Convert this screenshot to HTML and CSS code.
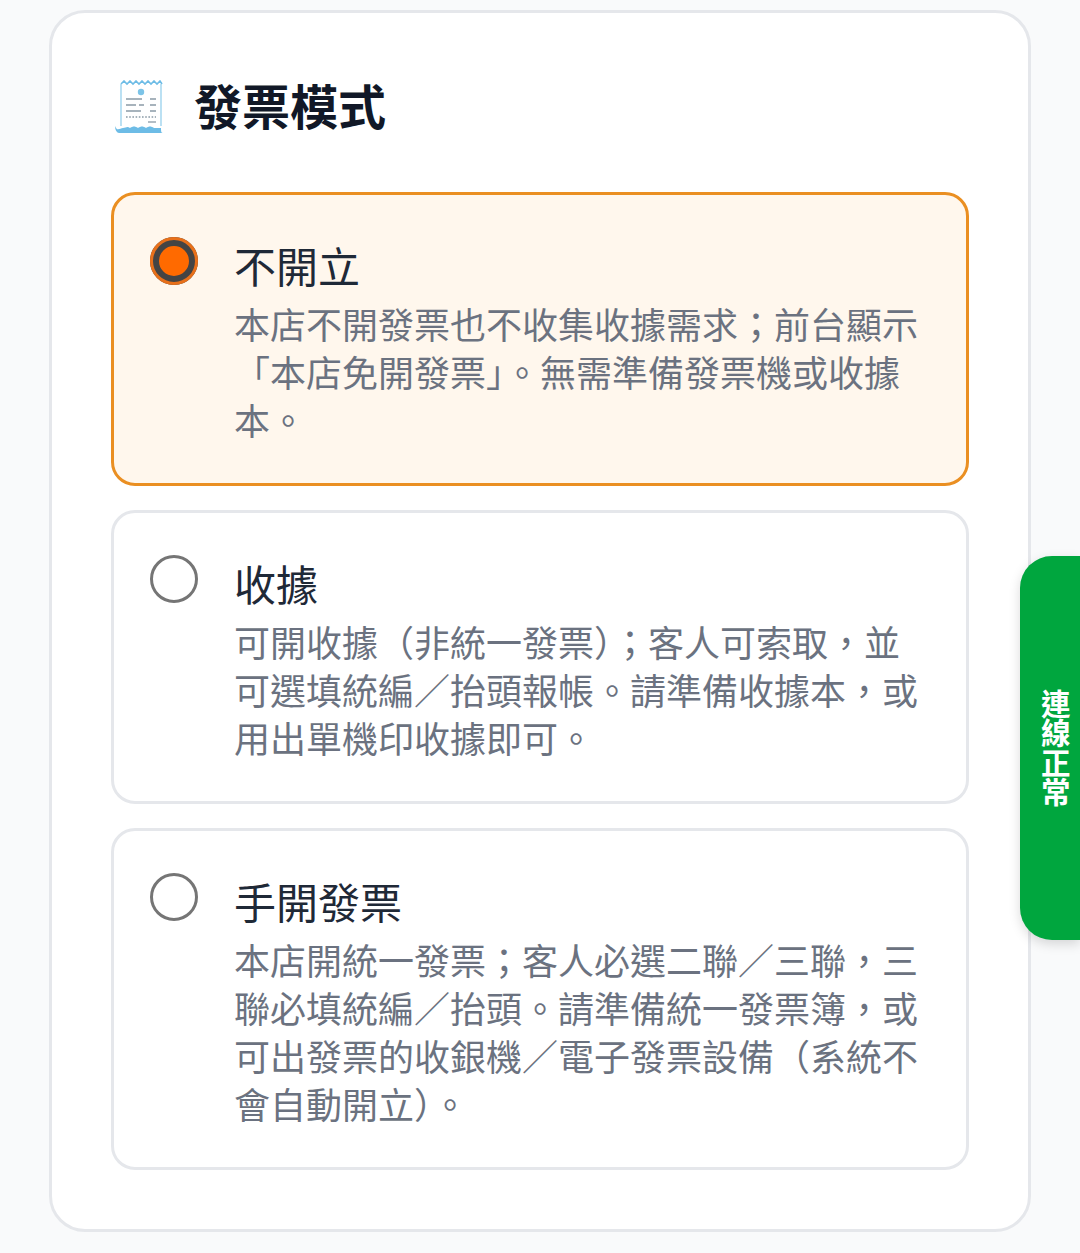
FILE: index.html
```html
<!doctype html>
<html lang="zh-Hant">
	<head>
		<meta charset="utf-8">
		<title>發票模式</title>
		<link rel="stylesheet" href="styles.css">
	</head>
	<body>
		<section class="card">
			<h2 class="card-title">
				<svg class="title-icon" viewBox="0 0 48 54" width="48" height="54" aria-hidden="true">
					<path d="M6 4 L9 1 L12 4 L15 1 L18 4 L21 1 L24 4 L27 1 L30 4 L33 1 L36 4 L39 1 L42 4 L45 1 L47 4" fill="none" stroke="#6dbce6" stroke-width="1.6"/>
					<path d="M6 4 V46 M46 4 V46" fill="none" stroke="#9fd4ee" stroke-width="1.4"/>
					<circle cx="26" cy="12" r="3.2" fill="#7cc4e8"/>
					<g stroke="#8a9aa6" stroke-width="1.3">
						<path d="M11 19 H27 M35 19 H41"/>
						<path d="M11 25 H21 M24 25 H29 M35 25 H41"/>
						<path d="M11 31 H26 M35 31 H41"/>
						<path d="M11 37 H41" stroke-dasharray="1.6 1.6"/>
						<path d="M33 42 H41"/>
					</g>
					<path d="M0 46 C2 52 5 48 8 48 C11 48 12 46 15 48 C18 46 20 46 23 48 C26 46 28 46 31 48 C34 46 36 46 39 48 L46 48 C46 51 46 53 48 53 H4 C2 53 0 50 0 46 Z" fill="#6dbce6"/>
				</svg>
				<span class="title-text">發票模式</span>
			</h2>
			<div class="options">
				<label class="option selected">
					<span class="radio"></span>
					<span class="option-text">
						<span class="option-name">不開立</span>
						<span class="option-desc">本店不開發票也不收集收據需求&#xFF1B;前台顯示「本店免開發票」。無需準備發票機或收據本。</span>
					</span>
				</label>
				<label class="option">
					<span class="radio"></span>
					<span class="option-text">
						<span class="option-name">收據</span>
						<span class="option-desc">可開收據&#xFF08;非統一發票&#xFF09;&#xFF1B;客人可索取&#xFF0C;並可選填統編&#xFF0F;抬頭報帳。請準備收據本&#xFF0C;或用出單機印收據即可。</span>
					</span>
				</label>
				<label class="option">
					<span class="radio"></span>
					<span class="option-text">
						<span class="option-name">手開發票</span>
						<span class="option-desc">本店開統一發票&#xFF1B;客人必選二聯&#xFF0F;三聯&#xFF0C;三聯必填統編&#xFF0F;抬頭。請準備統一發票簿&#xFF0C;或可出發票的收銀機&#xFF0F;電子發票設備&#xFF08;系統不會自動開立&#xFF09;。</span>
					</span>
				</label>
			</div>
		</section>
		<div class="status-tab"><span>連線正常</span></div>
	</body>
</html>
```

FILE: styles.css
```css
html, body {
	margin: 0;
	background-color: #f9fafb;
	color: #111827;
	font-family: "Noto Sans CJK TC", "Noto Sans", sans-serif;
}
body {
	padding: 10px 49px 21px;
	overflow: hidden;
}
.card {
	box-sizing: border-box;
	height: 1222px;
	padding: 67px 59px 0;
	background-color: #fff;
	border: 3px solid #e5e7eb;
	border-radius: 36px;
}
.card-title {
	display: flex;
	align-items: center;
	gap: 31px;
	height: 54px;
	margin: 0 0 58px 4px;
	font-size: 48px;
	font-weight: 700;
	line-height: 44px;
}
.title-icon {
	flex: none;
}
.title-text {
	padding-bottom: 7px;
}
.options {
	display: flex;
	flex-direction: column;
	gap: 24px;
}
.option {
	box-sizing: border-box;
	display: flex;
	gap: 36px;
	padding: 42px 36px 0;
	border: 3px solid #e5e7eb;
	border-radius: 24px;
	height: 294px;
}
.option:last-child {
	height: 342px;
}
.option.selected {
	background-color: #fff7ed;
	border-color: #ea8f22;
}
.radio {
	box-sizing: border-box;
	flex: none;
	width: 48px;
	height: 48px;
	border: 3px solid #757575;
	border-radius: 50%;
	background-color: #fff;
}
.selected .radio {
	border: 9px solid #444;
	background-color: #ff6a00;
	outline: 3px solid #e8701a;
	outline-offset: -3px;
}
.option-text {
	display: flex;
	flex-direction: column;
	min-width: 0;
	padding-top: 2px;
}
.option-name {
	font-size: 42px;
	line-height: 52px;
	color: #1f2937;
	margin-bottom: 8px;
}
.option-desc {
	font-size: 36px;
	line-height: 48px;
	color: #6b7280;
}
.status-tab {
	position: absolute;
	top: 556px;
	right: 0;
	display: flex;
	align-items: center;
	justify-content: center;
	width: 60px;
	height: 384px;
	padding-left: 10px;
	box-sizing: border-box;
	background-color: #00a63e;
	border-radius: 32px 0 0 32px;
	box-shadow: 0 4px 12px rgba(0, 0, 0, 0.15);
	color: #fff;
	font-size: 29.5px;
	font-weight: 700;
	line-height: 1;
	writing-mode: vertical-rl;
}
```
